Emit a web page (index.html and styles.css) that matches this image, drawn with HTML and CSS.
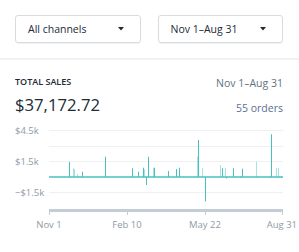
FILE: index.html
```html
<!DOCTYPE html>
<html lang="en">
<head>
    <meta charset="UTF-8">
    <meta name="viewport" content="width=device-width, initial-scale=1.0">
    <title>Total sales</title>
    <link rel="stylesheet" href="styles.css">
</head>
<body>
    <div class="toolbar">
        <div class="select">
            <span>All channels</span>
            <svg class="caret" width="6" height="4" viewBox="0 0 6 4"><polygon points="0,0 6,0 3,3.5"/></svg>
        </div>
        <div class="select">
            <span>Nov 1–Aug 31</span>
            <svg class="caret" width="6" height="4" viewBox="0 0 6 4"><polygon points="0,0 6,0 3,3.5"/></svg>
        </div>
    </div>
    <div class="divider"></div>

    <section class="card">
        <div class="summary">
            <div>
                <h2 class="label">TOTAL SALES</h2>
                <p class="amount">$37,172.72</p>
            </div>
            <div class="meta">
                <p class="period">Nov 1–Aug 31</p>
                <a class="orders" href="#">55 orders</a>
            </div>
        </div>

        <div class="chart">
            <div class="y-axis">
                <span>$4.5k</span>
                <span>$1.5k</span>
                <span>−$1.5k</span>
            </div>
            <svg class="plot" width="234" height="100" viewBox="0 0 234 100">
                <!-- lignes de grade -->
                <path d="M0 15.5H234M0 31.5H234M0 46.5H234M0 77.5H234" stroke="#eef0f2" stroke-width="1" fill="none"/>
                <!-- barras claras -->
                <path d="M24.5 62V53.3M25.5 62V54M28.5 62V59M95.5 62V54.3M104.5 62V52.7M148.5 62V41.7M153.5 62V53.3M171.5 62V50M176.5 62V53M207.5 62V46.7M227.5 62V53M229.5 62V53" stroke="#a6e2df" stroke-width="1" fill="none"/>
                <!-- linha base -->
                <path d="M0 62H234" stroke="#47c1bf" stroke-width="1.3" fill="none"/>
                <!-- barras -->
                <path d="M20.5 62V47M33.5 62V56.7M56.5 62V41.7M83.5 62V53.3M89.5 62V56.7M94.5 62V52.7M97.5 62V70M99.5 62V41.7M105.5 62V52.7M119.5 62V56M127.5 62V54M130.5 62V52.7M149.5 62V25M156.5 62V86.5M173.5 62V53.3M177.5 62V63.5M184.5 62V53.3M191.5 62V63M193.5 62V53.7M220.5 62V63M222.5 62V19.3M232.5 62V63" stroke="#47c1bf" stroke-width="1" fill="none"/>
                <!-- eixo -->
                <rect x="0" y="94" width="234" height="3" fill="#c4cdd5"/>
                <path d="M0.5 94V100M78.5 94V100M156.5 94V100M233.5 94V100" stroke="#c4cdd5" stroke-width="1" fill="none"/>
            </svg>
        </div>

        <div class="x-axis">
            <span>Nov 1</span>
            <span>Feb 10</span>
            <span>May 22</span>
            <span>Aug 31</span>
        </div>
    </section>
</body>
</html>
```

FILE: styles.css
```css
* {
    margin: 0;
    padding: 0;
    box-sizing: border-box;
}

body {
    font-family: "Open Sans", "Noto Sans", sans-serif;
    color: #212b36;
    background: #fff;
    width: 299px;
    overflow: hidden;
}

.toolbar {
    display: flex;
    gap: 17px;
    padding: 15px 16px 15px 15px;
}

.select {
    flex: 1;
    height: 28px;
    display: flex;
    align-items: center;
    justify-content: space-between;
    padding: 0 16px 0 12px;
    border: 1px solid #d6dce2;
    border-radius: 3px;
    box-shadow: 0 1px 0 rgba(22, 29, 37, 0.06);
    font-size: 10.5px;
}

.caret {
    display: block;
    fill: #212b36;
}

.divider {
    height: 2px;
    background: #f1f1f1;
}

.card {
    padding: 16px 16px 0 15px;
}

.summary {
    display: flex;
    justify-content: space-between;
}

.label {
    font-size: 9px;
    line-height: 12px;
    font-weight: 600;
}

.amount {
    margin-top: 7px;
    font-size: 16.7px;
    line-height: 20px;
}

.meta {
    display: flex;
    flex-direction: column;
    align-items: flex-end;
    font-size: 10.5px;
    line-height: 14px;
}

.period {
    color: #637381;
}

.orders {
    margin-top: 11px;
    color: #5a6f94;
    text-decoration: none;
}

.chart {
    display: flex;
}

.y-axis {
    width: 34px;
    display: flex;
    flex-direction: column;
}

.y-axis span {
    height: 31px;
    line-height: 31px;
    font-size: 9.5px;
    color: #8f9aa5;
}

.plot {
    display: block;
}

.x-axis {
    display: grid;
    grid-template-columns: 78px 78px 78px 1fr;
    margin: 3px -14px 0 -5px;
    font-size: 9.5px;
    line-height: 13px;
    color: #8f9aa5;
}

.x-axis span {
    text-align: center;
}

.x-axis span:last-child {
    text-align: right;
}
```
